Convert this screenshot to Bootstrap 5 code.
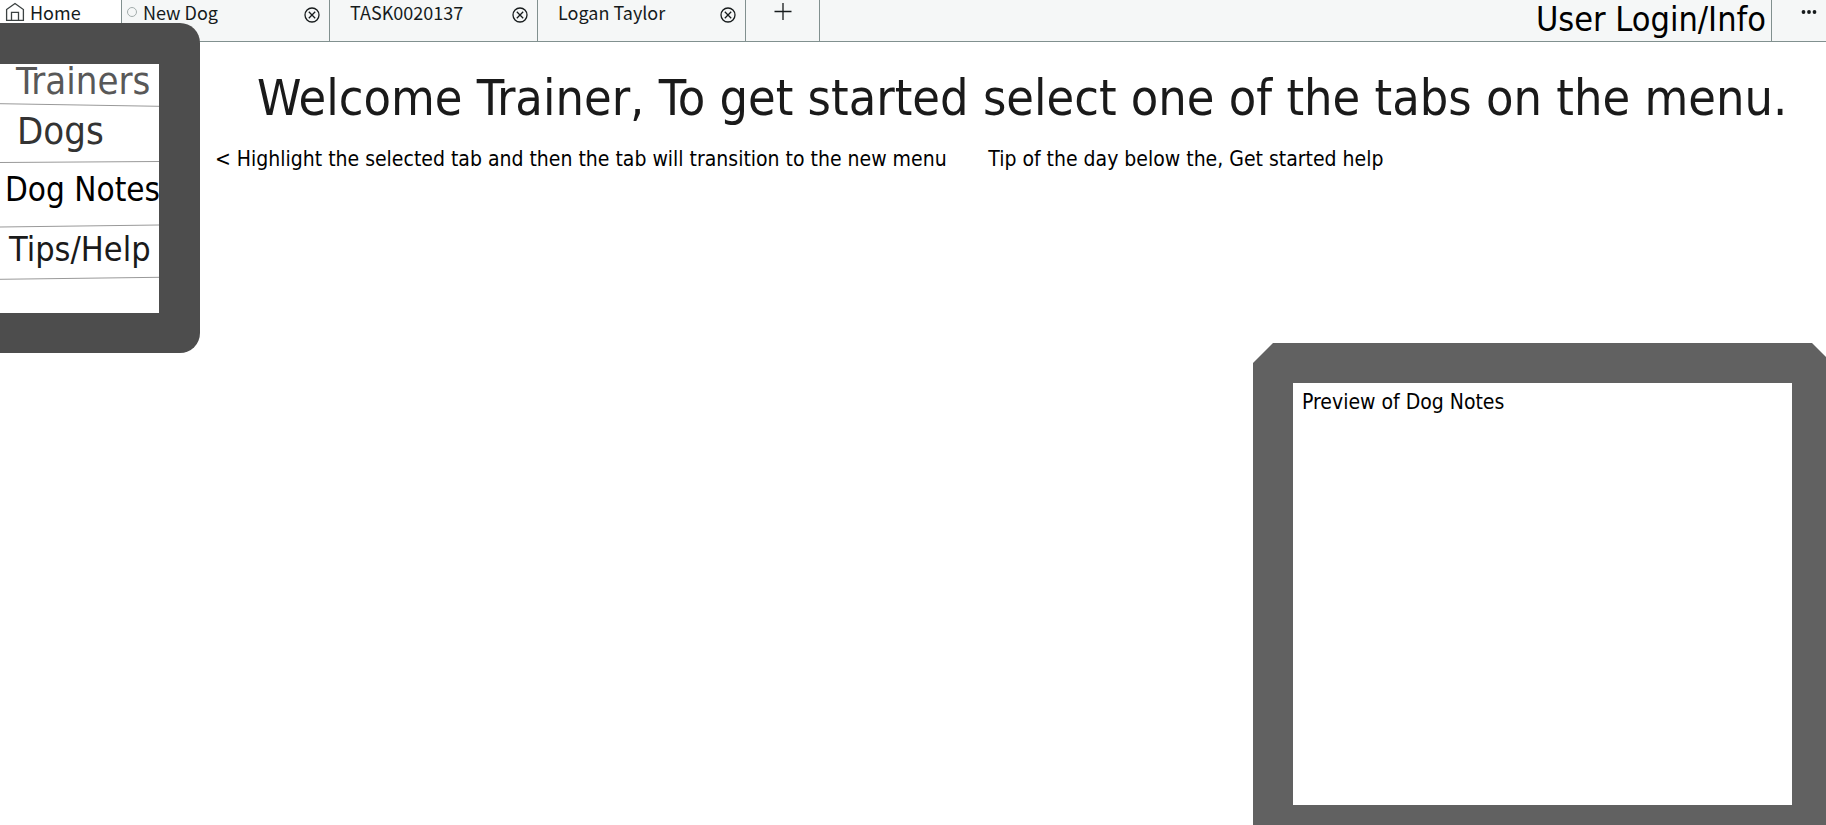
<!DOCTYPE html>
<html lang="en">
<head>
<meta charset="utf-8">
<meta name="viewport" content="width=device-width, initial-scale=1">
<title>Dog Training</title>
<link href="https://cdn.jsdelivr.net/npm/bootstrap@5.3.0/dist/css/bootstrap.min.css" rel="stylesheet">
<style>
  body { font-family: "DejaVu Sans Condensed", "DejaVu Sans", sans-serif; color: #000; }
  .tabbar { background: #f5f7f7; border-bottom: 1px solid #81908f; height: 42px; font-family: "Noto Sans CJK SC", sans-serif; }
  .tab { border-left: 1px solid #81908f; width: 208px; font-size: 18px; line-height: 24px; color: #161b1c; }
  .tab a { color: inherit; }
  .tab-home { width: 121px; border-left: 0; background: #fff; }
  .tab-add { width: 74px; }
  .tab-more { width: 55px; }
  .tab button { color: inherit; line-height: 0; }
  .tab-close { margin: 7px 9px 0 0; }
  .tab-label { padding-left: 20px; }
  .tab-dot { width: 10px; height: 10px; border: 1px solid #a3adac; margin: 7px 6px 0 5px; }
  .login { font-family: "DejaVu Sans Condensed", "DejaVu Sans", sans-serif; font-size: 34px; line-height: 38px; padding-right: 5px; }
  .tab .login { color: #000; }
  .side { width: 200px; margin-top: -19px; padding: 41px 41px 40px 0; background: #4d4d4d; border-radius: 0 20px 20px 0; z-index: 1; }
  .side ul { height: 249px; }
  .side li { position: relative; white-space: nowrap; }
  .side a { line-height: 34px; font-size: 33px; color: #000; }
  .side svg { position: absolute; left: 0; bottom: 0; width: 100%; height: 4px; }
  .item-trainers { height: 43px; padding-left: 16px; }
  .item-dogs { height: 56px; padding: 7px 0 0 17px; }
  .item-notes { height: 65px; padding: 10px 0 0 5px; }
  .item-help { height: 52px; padding: 4px 0 0 9px; }
  .side .item-trainers a { font-size: 38px; color: #585858; }
  .side .item-dogs a { font-size: 38px; color: #333; }
  .side .item-help a { font-size: 34px; color: #1a1a1a; }
  .welcome { font-size: 50px; line-height: 60px; padding: 26px 0 0 57px; color: #1a1a1a; white-space: nowrap; }
  .hints { font-size: 21px; line-height: 30px; margin: 16px 0 169px; padding-left: 15px; }
  .hints p { white-space: nowrap; }
  .hint-nav { width: 48%; }
  .preview { width: 573px; max-width: 100%; background: #616161; padding: 40px 34px 20px 40px;
    clip-path: polygon(0 20px, 20px 0, calc(100% - 14px) 0, 100% 14px, 100% 100%, 0 100%); }
  .preview h2 { font-size: 21px; line-height: 30px; padding: 4px 9px; }
</style>
</head>
<body class="min-vh-100 d-flex flex-column bg-white">
<header class="tabbar d-flex flex-shrink-0">
  <div class="tab tab-home d-flex">
    <a href="#" class="d-flex text-decoration-none">
      <svg class="ms-1 me-1" width="22" height="22" viewBox="0 0 22 22" fill="none" stroke="#3c4242" stroke-width="1.3"><path d="M2.6 9.5 11 3.5l8.400 6V20.300H2.600zM7.500 20.300v-8h7v8"/></svg>
      <span>Home</span>
    </a>
  </div>
  <div class="tab d-flex">
    <span class="tab-dot rounded-circle"></span>
    <a href="#" class="text-decoration-none">New Dog</a>
    <button class="tab-close border-0 bg-transparent p-0 ms-auto align-self-start" aria-label="Close New Dog"><svg width="16" height="16" viewBox="0 0 16 16" fill="none" stroke="currentColor" stroke-width="1.300"><circle cx="8" cy="8" r="7"/><path d="m4.800 4.800 6.400 6.400m0-6.400-6.400 6.400"/></svg></button>
  </div>
  <div class="tab d-flex">
    <a href="#" class="tab-label text-decoration-none">TASK0020137</a>
    <button class="tab-close border-0 bg-transparent p-0 ms-auto align-self-start" aria-label="Close TASK0020137"><svg width="16" height="16" viewBox="0 0 16 16" fill="none" stroke="currentColor" stroke-width="1.300"><circle cx="8" cy="8" r="7"/><path d="m4.800 4.800 6.400 6.400m0-6.400-6.400 6.400"/></svg></button>
  </div>
  <div class="tab d-flex">
    <a href="#" class="tab-label text-decoration-none">Logan Taylor</a>
    <button class="tab-close border-0 bg-transparent p-0 ms-auto align-self-start" aria-label="Close Logan Taylor"><svg width="16" height="16" viewBox="0 0 16 16" fill="none" stroke="currentColor" stroke-width="1.300"><circle cx="8" cy="8" r="7"/><path d="m4.800 4.800 6.400 6.400m0-6.400-6.400 6.400"/></svg></button>
  </div>
  <div class="tab tab-add d-flex justify-content-center">
    <button class="border-0 bg-transparent p-0 align-self-start" aria-label="New tab"><svg width="18" height="22" viewBox="0 0 18 22" stroke="currentColor" stroke-width="1.300"><path d="M.5 11.500h17M9 3v17"/></svg></button>
  </div>
  <div class="tab flex-fill d-flex justify-content-end">
    <a href="#" class="login text-decoration-none text-nowrap">User Login/Info</a>
  </div>
  <div class="tab tab-more d-flex justify-content-end pe-2">
    <button class="border-0 bg-transparent p-0 align-self-start" aria-label="More"><svg width="18" height="22" viewBox="0 0 18 22" fill="currentColor"><circle cx="3.500" cy="12" r="1.900"/><circle cx="9" cy="12" r="1.900"/><circle cx="14.500" cy="12" r="1.900"/></svg></button>
  </div>
</header>
<main class="d-flex flex-grow-1">
  <nav class="side flex-shrink-0 align-self-start" aria-label="Menu">
    <ul class="list-unstyled bg-white m-0">
      <li class="item-trainers"><a href="#" class="d-block text-decoration-none">Trainers</a><svg viewBox="0 0 159 4" preserveAspectRatio="none" stroke="#999"><path d="M0 .7 159 3.300"/></svg></li>
      <li class="item-dogs"><a href="#" class="d-block text-decoration-none">Dogs</a><svg viewBox="0 0 159 4" preserveAspectRatio="none" stroke="#999"><path d="M0 3.500 159 2.500"/></svg></li>
      <li class="item-notes"><a href="#" class="d-block text-decoration-none">Dog Notes</a><svg viewBox="0 0 159 4" preserveAspectRatio="none" stroke="#999"><path d="M0 3 159 1"/></svg></li>
      <li class="item-help"><a href="#" class="d-block text-decoration-none">Tips/Help</a><svg viewBox="0 0 159 4" preserveAspectRatio="none" stroke="#999"><path d="M0 3.300 159 1.300"/></svg></li>
    </ul>
  </nav>
  <div class="d-flex flex-column flex-grow-1">
    <h1 class="welcome fw-normal m-0">Welcome Trainer, To get started select one of the tabs on the menu.</h1>
    <div class="hints d-flex">
      <p class="hint-nav m-0">&lt; Highlight the selected tab and then the tab will transition to the new menu</p>
      <p class="m-0">Tip of the day below the, Get started help</p>
    </div>
    <section class="preview d-flex flex-grow-1 align-self-end">
      <div class="bg-white flex-fill"><h2 class="fw-normal m-0">Preview of Dog Notes</h2></div>
    </section>
  </div>
</main>
<script src="https://cdn.jsdelivr.net/npm/bootstrap@5.3.0/dist/js/bootstrap.bundle.min.js"></script>
</body>
</html>
